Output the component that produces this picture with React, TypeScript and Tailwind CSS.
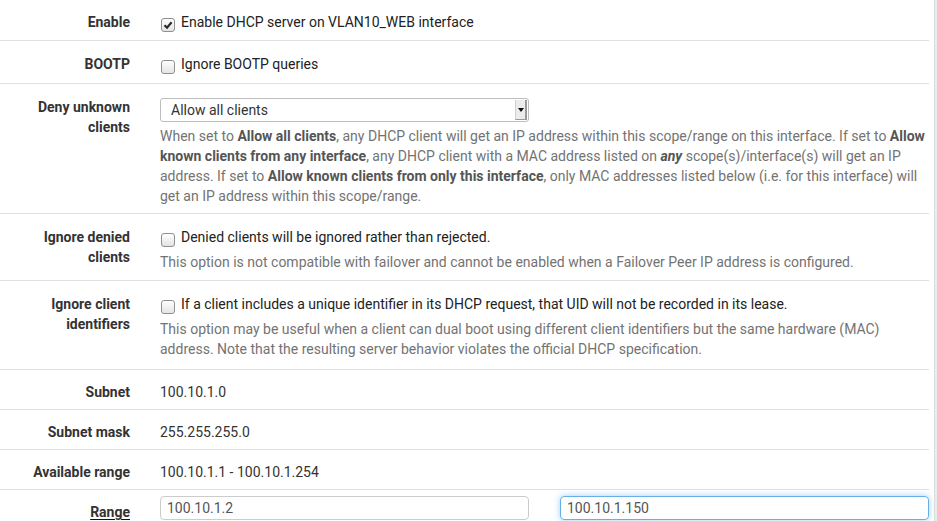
import React from 'react'

const font = { fontFamily: 'Roboto, "Liberation Sans", sans-serif' }

function Checkbox({ checked }: { checked?: boolean }) {
    return (
        <span className="mt-[6px] ml-[1px] mr-[6px] w-[14px] h-[14px] shrink-0 rounded-[3px] border border-[#8f8f8f] bg-gradient-to-b from-white to-[#e4e4e4] flex items-center justify-center">
            {checked && (
                <svg width="10" height="10" viewBox="0 0 10 10">
                    <path d="M1.5 5.2 L4 7.6 L8.6 2.2" fill="none" stroke="#2b2b2b" strokeWidth="2.2" />
                </svg>
            )}
        </span>
    )
}

function Row({ label, children, className }: { label: React.ReactNode; children: React.ReactNode; className: string }) {
    return (
        <div className={`flex border-b border-[#e0e0e0] ${className}`}>
            <div className="w-[130px] shrink-0 text-right font-bold text-[#333]">{label}</div>
            <div className="ml-[30px] w-[769px]">{children}</div>
        </div>
    )
}

function CheckLine({ checked, text }: { checked?: boolean; text: string }) {
    return (
        <div className="flex items-start text-[#222]">
            <Checkbox checked={checked} />
            <span>{text}</span>
        </div>
    )
}

export default function App() {
    return (
        <div className="w-[937px] h-[521px] overflow-hidden bg-[#ececec] text-[14px] leading-[20px]" style={font}>
            <div className="w-[935px] h-full bg-white border-r border-[#dcdcdc] pr-[5px]">
                <Row label="Enable" className="pt-[12px] pb-[8px]">
                    <CheckLine checked text="Enable DHCP server on VLAN10_WEB interface" />
                </Row>
                <Row label="BOOTP" className="pt-[13px] pb-[9px]">
                    <CheckLine text="Ignore BOOTP queries" />
                </Row>
                <Row label={<>Deny unknown<br />clients</>} className="pt-[13px] pb-[7px]">
                    <div className="mt-[1px] w-[369px] h-[24px] rounded-[3px] border border-[#bdbdbd] flex items-center text-[#333]">
                        <span className="flex-1 pl-[10px]">Allow all clients</span>
                        <span className="w-[12px] h-[20px] mr-[1px] bg-[#ececec] border-l border-[#d0d0d0] border-r-2 border-r-[#9a9a9a] border-b border-b-[#9a9a9a] flex items-center justify-center">
                            <svg width="6" height="4" viewBox="0 0 6 4"><path d="M0 0 H6 L3 4 Z" fill="#111" /></svg>
                        </span>
                    </div>
                    <p className="mt-[4px] text-[#737373]">
                        When set to <b className="text-[#555]">Allow all clients</b>, any DHCP client will get an IP address within this scope/range on this interface. If set to <b className="text-[#555]">Allow known clients from any interface</b>, any DHCP client with a MAC address listed on <b className="text-[#555]"><i>any</i></b> scope(s)/interface(s) will get an IP address. If set to <b className="text-[#555]">Allow known clients from only this interface</b>, only MAC addresses listed below (i.e. for this interface) will get an IP address within this scope/range.
                    </p>
                </Row>
                <Row label={<>Ignore denied<br />clients</>} className="pt-[13px] pb-[8px]">
                    <CheckLine text="Denied clients will be ignored rather than rejected." />
                    <p className="mt-[5px] text-[#737373]">This option is not compatible with failover and cannot be enabled when a Failover Peer IP address is configured.</p>
                </Row>
                <Row label={<>Ignore client<br />identifiers</>} className="pt-[13px] pb-[10px]">
                    <CheckLine text="If a client includes a unique identifier in its DHCP request, that UID will not be recorded in its lease." />
                    <p className="mt-[5px] text-[#737373]">This option may be useful when a client can dual boot using different client identifiers but the same hardware (MAC) address. Note that the resulting server behavior violates the official DHCP specification.</p>
                </Row>
                <Row label="Subnet" className="pt-[12px] pb-[7px]">
                    <span className="text-[#333]">100.10.1.0</span>
                </Row>
                <Row label="Subnet mask" className="pt-[12px] pb-[7px]">
                    <span className="text-[#333]">255.255.255.0</span>
                </Row>
                <Row label="Available range" className="pt-[12px] pb-[7px]">
                    <span className="text-[#333]">100.10.1.1 - 100.10.1.254</span>
                </Row>
                <div className="flex pt-[6px]">
                    <div className="w-[130px] shrink-0 text-right font-bold text-[#333] mt-[6px]">
                        <span className="underline decoration-[#111] underline-offset-[2px]">Range</span>
                    </div>
                    <div className="ml-[30px] w-[769px] grid grid-cols-2 gap-x-[31px]">
                        <div className="h-[24px] rounded-[4px] border border-[#ccc] pl-[6px] flex items-center text-[#555]">100.10.1.2</div>
                        <div className="h-[24px] rounded-[4px] border border-[#66afe9] shadow-[0_0_6px_rgba(102,175,233,0.6)] pl-[6px] flex items-center text-[#555]">100.10.1.150</div>
                    </div>
                </div>
            </div>
        </div>
    )
}
